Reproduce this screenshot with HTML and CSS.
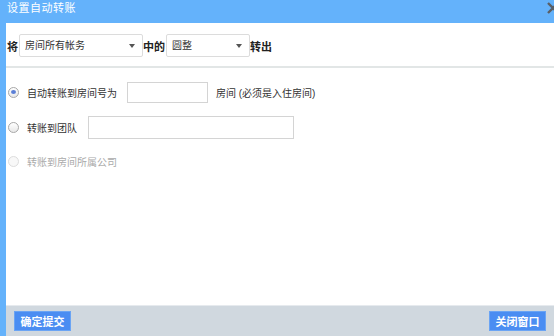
FILE: index.html
```html
<!DOCTYPE html>
<html lang="zh-CN">
<head>
    <meta charset="UTF-8">
    <title>设置自动转账</title>
    <link rel="stylesheet" href="styles.css">
</head>
<body>
    <div class="window">
        <div class="title-bar">
            <span class="title">设置自动转账</span>
            <svg class="close" width="10" height="12" viewBox="0 0 10 12">
                <path d="M1 1 L11 11 M11 1 L1 11" stroke="#5a5f66" stroke-width="2.4"/>
            </svg>
        </div>
        <div class="panel">
            <div class="top-row">
                <span class="bold">将</span>
                <div class="select select-wide">房间所有帐务<span class="arrow"></span></div>
                <span class="bold">中的</span>
                <div class="select select-narrow">圆整<span class="arrow"></span></div>
                <span class="bold">转出</span>
            </div>
            <div class="options">
                <label class="option">
                    <span class="radio checked"></span>
                    <span>自动转账到房间号为</span>
                    <span class="box box-room"></span>
                    <span class="hint">房间 (必须是入住房间)</span>
                </label>
                <label class="option">
                    <span class="radio"></span>
                    <span>转账到团队</span>
                    <span class="box box-team"></span>
                </label>
                <label class="option disabled">
                    <span class="radio"></span>
                    <span>转账到房间所属公司</span>
                </label>
            </div>
            <div class="footer">
                <button class="btn">确定提交</button>
                <button class="btn">关闭窗口</button>
            </div>
        </div>
    </div>
</body>
</html>
```

FILE: styles.css
```css
* {
    margin: 0;
    padding: 0;
    box-sizing: border-box;
}

body {
    font-family: 'Liberation Sans', 'Noto Sans CJK SC', sans-serif;
    font-size: 10px;
    color: #333;
    background: #fff;
}

.window {
    width: 554px;
    height: 336px;
    background: #64b2fb;
    display: flex;
    flex-direction: column;
    overflow: hidden;
}

.title-bar {
    height: 23px;
    display: flex;
    justify-content: space-between;
    align-items: flex-start;
    padding: 1px 0 0 7px;
}

.title {
    color: #fff;
    font-size: 11px;
    line-height: 14px;
    letter-spacing: 0.5px;
}

.close {
    margin-top: 1px;
    margin-right: -3px;
}

.panel {
    flex: 1;
    margin-left: 6px;
    background: #fff;
    display: flex;
    flex-direction: column;
}

.top-row {
    height: 45px;
    display: flex;
    align-items: center;
    padding: 2px 0 0 1px;
    border-bottom: 2px solid #e2e6e6;
}

.bold {
    font-weight: bold;
    font-size: 11px;
    color: #222;
}

.select {
    position: relative;
    height: 23px;
    border: 1px solid #dcdcdc;
    border-radius: 2px;
    padding-left: 5px;
    line-height: 21px;
    color: #333;
}

.select-wide {
    width: 124px;
    margin-left: 1px;
}

.select-narrow {
    width: 84px;
    margin-left: 1px;
}

.arrow {
    position: absolute;
    right: 7px;
    top: 9px;
    border-left: 3px solid transparent;
    border-right: 3px solid transparent;
    border-top: 4px solid #555;
}

.options {
    flex: 1;
    padding: 13px 0 0 2px;
    display: flex;
    flex-direction: column;
}

.option {
    display: flex;
    align-items: center;
    height: 22px;
    margin-bottom: 13px;
    color: #333;
}

.option.disabled {
    color: #aaa;
    margin-top: -1px;
}

.radio {
    width: 11px;
    height: 11px;
    border: 1px solid #a8a8a8;
    border-radius: 50%;
    background: linear-gradient(#fff, #e8e8e8);
    margin-right: 8px;
    display: flex;
    justify-content: center;
    align-items: center;
}

.radio.checked::after {
    content: '';
    width: 5px;
    height: 4px;
    border-radius: 50%;
    background: #5b7fd6;
}

.disabled .radio {
    border-color: #ddd;
    background: #f8f8f8;
}

.box {
    height: 21px;
    border: 1px solid #d4d4d4;
}

.box-room {
    width: 81px;
    margin-left: 10px;
}

.box-team {
    width: 206px;
    height: 23px;
    margin-left: 11px;
}

.hint {
    margin-left: 8px;
}

.footer {
    height: 31px;
    background: #d0d8df;
    display: flex;
    justify-content: space-between;
    align-items: center;
    padding: 0 8px 0 8px;
    border-top: 1px solid #e6eaee;
}

.btn {
    height: 20px;
    width: 57px;
    border: 1px solid #6aa4f4;
    background: #4a8df2;
    color: #fff;
    font-family: 'Liberation Sans', 'Noto Sans CJK SC', sans-serif;
    font-size: 11px;
    font-weight: bold;
}
```
